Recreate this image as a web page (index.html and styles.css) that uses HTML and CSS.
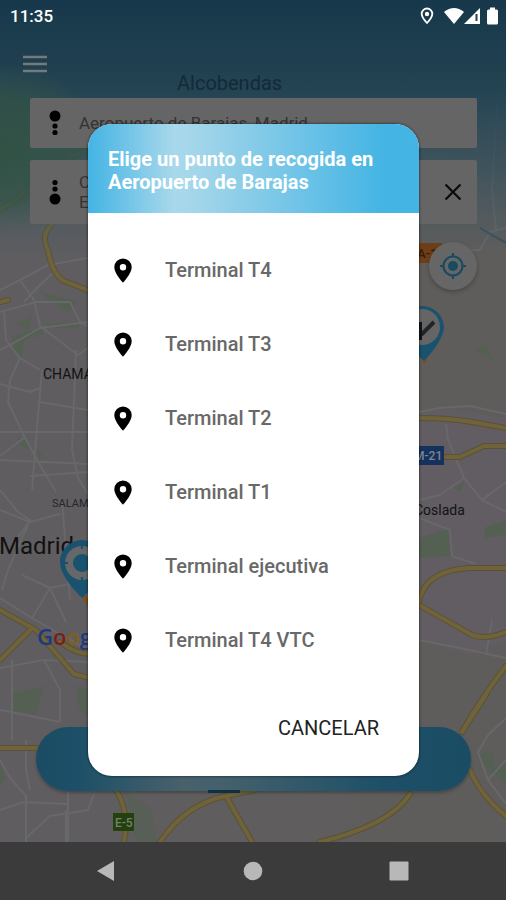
FILE: index.html
```html
<!DOCTYPE html>
<html lang="es">
<head>
<meta charset="utf-8">
<meta name="viewport" content="width=device-width, initial-scale=1">
<title>Punto de recogida</title>
<link rel="stylesheet" href="styles.css">
</head>
<body>
<main class="app">
  <svg class="map" viewBox="0 0 506 842" preserveAspectRatio="xMidYMid slice" aria-hidden="true">
    <defs>
      <linearGradient id="land" x1="0" x2="1" y1="0" y2="0">
        <stop offset="0" stop-color="#5f5d60"/>
        <stop offset="1" stop-color="#5f5d5b"/>
      </linearGradient>
      <linearGradient id="sky" x1="0" x2="0" y1="0" y2="1">
        <stop offset="0" stop-color="#16384a"/>
        <stop offset=".35" stop-color="#1f4152" stop-opacity=".92"/>
        <stop offset=".65" stop-color="#2b4d5c" stop-opacity=".6"/>
        <stop offset="1" stop-color="#395866" stop-opacity="0"/>
      </linearGradient>
      <radialGradient id="forest">
        <stop offset="0" stop-color="#315243" stop-opacity=".9"/>
        <stop offset=".6" stop-color="#325344" stop-opacity=".7"/>
        <stop offset="1" stop-color="#3b574c" stop-opacity="0"/>
      </radialGradient>
    </defs>
    <rect width="506" height="842" fill="url(#land)"/>
    <path fill="#615d62" d="M419 412L450 409L506 418V640L470 655L419 640Z"/>
    <g fill="#536052">
      <path d="M40 292L62 298L76 300L70 312L52 302ZM16 324L32 316L28 330ZM12 336L42 328L44 334L24 340L22 358L12 348ZM46 324L80 322L78 328L48 328ZM18 436L28 442L30 450L18 444ZM36 448L42 454L40 460Z"/>
      <path d="M12 694L44 686L36 714L12 710ZM76 686L88 690V718L80 710ZM0 762L5 778L0 786Z"/>
      <path d="M419 538L448 529L450 556L419 558ZM484 528L506 520V534L486 538ZM474 350L486 346L496 362ZM454 488L464 482L460 492ZM478 755L492 750L494 768L482 766ZM488 770L506 762V782Z"/>
      <path d="M126 792L150 808L158 842H136Z" opacity=".6"/>
    </g>
    <g fill="none" stroke="#686769" stroke-width="2" stroke-linejoin="round">
      <path d="M0 290L20 280L48 265L88 258M20 280L34 300L40 326L78 355L88 348M0 312L36 302L70 302L80 322L88 326M0 350L12 344L40 328L88 322M4 312L6 340L20 358L10 380L8 402L24 436L40 465L56 492M20 358L40 370M0 384L30 392L40 388M42 370L36 440L32 490M40 402L88 410M76 350L72 450L78 478L88 494M0 432L88 432M0 460L88 464M0 456L24 438M30 476L60 474L88 472M54 272L40 285L24 302M0 490L18 512L30 520L8 570L2 590M0 510L30 522L60 514M22 575L50 588L88 580M30 520L16 540M50 588L32 618M50 588L66 622M62 500L70 600M0 598L32 618L88 650M0 668L44 660L88 662M12 660L12 740M0 710L60 722M44 660L60 690L60 722"/>
      <path d="M0 760L10 778L26 796L26 842M0 810L24 802L68 804M68 792L68 842M26 838L50 816L88 810L94 794M26 740V770L30 790M66 810L66 842"/>
      <path d="M506 228L490 232L480 250L462 250M498 90L492 190L496 230M419 412L440 408L470 406L506 414M446 424L448 440L464 478L482 500L506 512M464 478L440 495L419 500M419 518L450 530L452 556L476 564M419 640L460 648L506 658M492 620L486 655M506 482L482 500L492 492M506 718L488 735L478 752L488 780L506 804M488 780L506 760"/>
    </g>
    <g fill="none" stroke="#566157" stroke-width="4" opacity=".7">
      <path d="M313 30V65Q300 92 280 100M390 100Q405 70 440 60T506 52M50 70L68 98L88 140"/>
    </g>
    <g fill="none" stroke="#5a5238" stroke-width="6" stroke-linecap="round" stroke-linejoin="round">
      <path d="M0 210L28 190L50 165L88 150M52 224Q40 236 48 250Q52 274 64 281L90 291M0 302L8 300"/>
      <path d="M419 418Q450 418 472 422L506 428M446 457L460 457L484 446H506"/>
      <path d="M419 602Q425 570 470 568L506 568M419 605L472 635Q486 640 506 632M506 666Q480 700 462 732"/>
      <path d="M0 610L36 630L74 674L90 678M32 628L0 660M60 642Q76 654 90 654M0 748H40"/>
      <path d="M116 790Q130 812 124 842M160 842Q185 805 225 796L255 790M226 796L252 842M320 842Q390 825 410 794M470 770Q480 795 506 816M462 732L486 695"/>
    </g>
    <g fill="none" stroke="#70633a" stroke-width="4" stroke-linecap="round" stroke-linejoin="round">
      <path d="M0 210L28 190L50 165L88 150M52 224Q40 236 48 250Q52 274 64 281L90 291M0 302L8 300"/>
      <path d="M419 418Q450 418 472 422L506 428M446 457L460 457L484 446H506"/>
      <path d="M419 602Q425 570 470 568L506 568M419 605L472 635Q486 640 506 632M506 666Q480 700 462 732"/>
      <path d="M0 610L36 630L74 674L90 678M32 628L0 660M60 642Q76 654 90 654M0 748H40"/>
      <path d="M116 790Q130 812 124 842M160 842Q185 805 225 796L255 790M226 796L252 842M320 842Q390 825 410 794M470 770Q480 795 506 816M462 732L486 695"/>
    </g>
    <path d="M480 228L506 243" stroke="#3b4f63" stroke-width="2"/>
    <rect width="506" height="260" fill="url(#sky)"/>
    <ellipse cx="0" cy="150" rx="110" ry="85" fill="url(#forest)"/>

    <g class="map-text">
      <text x="177" y="90" font-size="20" fill="#122a38">Alcobendas</text>
      <text x="43" y="379" font-size="14">CHAMARTÍN</text>
      <text x="52" y="507" font-size="11" fill="#262626">SALAMANCA</text>
      <text x="-1" y="554" font-size="24">Madrid</text>
      <text x="414" y="515" font-size="14">Coslada</text>
      <text class="brand" x="37" y="645" font-size="22"><tspan fill="#1b3a80">G</tspan><tspan fill="#7c1d18">o</tspan><tspan fill="#80601a">o</tspan><tspan fill="#1b3a80">g</tspan></text>
    </g>
    <rect x="404" y="243" width="38" height="20" fill="#6f3e17"/>
    <text class="shield" x="417" y="258" font-size="13" fill="#321d0c">A-1</text>
    <rect x="400" y="446" width="44" height="19" fill="#15325f"/>
    <text class="shield" x="414" y="460" font-size="12" fill="#80858c">M-21</text>
    <rect x="113" y="813" width="21" height="18" fill="#24400f"/>
    <text class="shield" x="115" y="827" font-size="12" fill="#75826c">E-5</text>

    <path d="M80 594L90 610V602L83 592Z" fill="#7a5119"/>
    <path d="M60 562A22 22 0 0 1 104 562Q104 578 82 598Q60 576 60 562Z" fill="#18526e"/>
    <circle cx="82" cy="563" r="17" fill="#656769"/>
    <circle cx="82" cy="563" r="9" fill="#18526e"/>
    <path d="M82 546v3M82 577v3M65 563h3" stroke="#18526e" stroke-width="2"/>
    <path d="M421 352L424 365L428 358Z" fill="#7a5119"/>
    <path d="M400 328A22 22 0 0 1 444 328Q442 342 424 361Q400 340 400 328Z" fill="#18526e"/>
    <circle cx="422" cy="327" r="18" fill="#656565"/>
    <path d="M412 338L422 334L434 322" fill="none" stroke="#202528" stroke-width="4"/>
    <path d="M420 322V340" stroke="#101518" stroke-width="4"/>
  </svg>

  <header class="status">
    <span>11:35</span>
    <span class="status-icons">
      <svg width="14" height="18" viewBox="0 0 14 18"><path d="M7 1.500a5.300 5.300 0 0 0-5.300 5.300C1.700 10.500 7 16 7 16s5.300-5.500 5.300-9.200A5.300 5.300 0 0 0 7 1.500Z" fill="none" stroke="#fff" stroke-width="1.800"/><circle cx="7" cy="7" r="2.200" fill="#fff"/></svg>
      <svg class="wifi" width="20" height="18" viewBox="0 0 20 18"><path d="M0 5Q10-3 20 5L10 17Z" fill="#fff"/></svg>
      <svg width="16" height="18" viewBox="0 0 16 18"><path d="M0 17L16 1V17Z" fill="#fff"/><path d="M12.500 7V14" stroke="#21404f" stroke-width="2"/></svg>
      <svg class="battery" width="11" height="18" viewBox="0 0 11 18"><path d="M3 0.500H8V2.500H9.500Q11 2.500 11 4V16Q11 17.500 9.500 17.500H1.500Q0 17.500 0 16V4Q0 2.500 1.500 2.500H3Z" fill="#fff"/></svg>
    </span>
  </header>

  <button class="menu" type="button" aria-label="Menú">
    <svg width="24" height="18" viewBox="0 0 24 18"><path d="M0 2H24M0 9H24M0 16H24" stroke="#74797b" stroke-width="2.600"/></svg>
  </button>

  <form class="route">
    <div class="field">
      <svg width="12" height="26" viewBox="0 0 12 26"><circle cx="6" cy="6" r="5.500"/><circle cx="6" cy="16" r="2.600"/><circle cx="6" cy="22.500" r="2.600"/></svg>
      <input type="text" value="Aeropuerto de Barajas, Madrid" aria-label="Origen">
    </div>
    <div class="field tall">
      <svg width="12" height="26" viewBox="0 0 12 26"><circle cx="6" cy="3.500" r="2.600"/><circle cx="6" cy="10" r="2.600"/><circle cx="6" cy="20" r="5.500"/></svg>
      <textarea rows="2" aria-label="Destino">C
E</textarea>
      <button class="clear" type="button" aria-label="Borrar destino">
        <svg width="18" height="18" viewBox="0 0 18 18"><path d="M1.500 1.500L16.500 16.500M16.500 1.500L1.500 16.500" stroke="#0b0b0b" stroke-width="2.200"/></svg>
      </button>
    </div>
  </form>

  <button class="locate" type="button" aria-label="Mi ubicación">
    <svg width="26" height="26" viewBox="0 0 26 26"><circle cx="13" cy="13" r="9.500" fill="none" stroke="#194a62" stroke-width="2.200"/><circle cx="13" cy="13" r="5" fill="#194a62"/><path d="M13 0V4M13 22V26M0 13H4M22 13H26" stroke="#194a62" stroke-width="2.200"/></svg>
  </button>

  <button class="confirm" type="button" aria-label="Confirmar"></button>
  <div class="handle"></div>
</main>

<nav class="system">
  <button type="button" aria-label="Atrás"><svg width="20" height="22" viewBox="0 0 20 22"><path d="M1 11L18 1V21Z"/></svg></button>
  <button type="button" aria-label="Inicio"><svg width="20" height="22" viewBox="0 0 20 22"><circle cx="10" cy="11" r="9.300"/></svg></button>
  <button type="button" aria-label="Recientes"><svg width="20" height="22" viewBox="0 0 20 22"><rect x="0.500" y="1.500" width="19" height="19" rx="1"/></svg></button>
</nav>

<div class="overlay">
  <section class="dialog" role="dialog" aria-labelledby="dialog-title">
    <h1 id="dialog-title">Elige un punto de recogida en Aeropuerto de Barajas</h1>
    <ul>
      <li><button type="button"><svg width="18" height="25" viewBox="0 0 18 25"><use href="#pin"/></svg>Terminal T4</button></li>
      <li><button type="button"><svg width="18" height="25" viewBox="0 0 18 25"><use href="#pin"/></svg>Terminal T3</button></li>
      <li><button type="button"><svg width="18" height="25" viewBox="0 0 18 25"><use href="#pin"/></svg>Terminal T2</button></li>
      <li><button type="button"><svg width="18" height="25" viewBox="0 0 18 25"><use href="#pin"/></svg>Terminal T1</button></li>
      <li><button type="button"><svg width="18" height="25" viewBox="0 0 18 25"><use href="#pin"/></svg>Terminal ejecutiva</button></li>
      <li><button type="button"><svg width="18" height="25" viewBox="0 0 18 25"><use href="#pin"/></svg>Terminal T4 VTC</button></li>
    </ul>
    <button class="cancel" type="button">CANCELAR</button>
  </section>
</div>

<svg class="defs" width="0" height="0" aria-hidden="true">
  <symbol id="pin" viewBox="0 0 18 25"><path fill-rule="evenodd" d="M9 0.500A8.700 8.700 0 0 0 0.300 9.200C0.300 15.500 9 24.700 9 24.700S17.700 15.500 17.700 9.200A8.700 8.700 0 0 0 9 0.500ZM9 6A3.200 3.200 0 1 1 9 12.400A3.200 3.200 0 0 1 9 6Z"/></symbol>
</svg>
</body>
</html>
```
FILE: styles.css
```css
* {
  box-sizing: border-box;
}

body {
  margin: 0;
  min-height: 100vh;
  display: flex;
  flex-direction: column;
  position: relative;
  font-family: Roboto, sans-serif;
  background: #5f5d5e;
}

button {
  padding: 0;
  border: 0;
  background: none;
  font: inherit;
  color: inherit;
  cursor: pointer;
}

svg {
  display: block;
  flex: none;
}

.defs {
  position: absolute;
}

.app {
  flex: 1;
  position: relative;
  isolation: isolate;
  overflow: hidden;
  display: flex;
  flex-direction: column;
}

.map {
  position: absolute;
  inset: 0;
  z-index: -1;
  width: 100%;
  height: 100%;
}

.map-text {
  fill: #121212;
}

.shield {
  font-weight: 500;
}

.brand {
  font-family: "Open Sans", sans-serif;
  font-weight: 600;
}

.status {
  display: flex;
  justify-content: space-between;
  align-items: center;
  height: 32px;
  padding: 0 8px 0 10px;
  color: #fff;
  font-size: 17px;
  font-weight: 500;
}

.status-icons {
  display: flex;
}

.wifi {
  margin-left: 10px;
}

.battery {
  margin-left: 7px;
}

.menu {
  align-self: flex-start;
  margin: 23px 0 0 23px;
}

.route {
  display: grid;
  gap: 12px;
  margin: 25px 29px 0 30px;
}

.field {
  display: flex;
  align-items: center;
  min-height: 50px;
  padding: 0 15px 0 19px;
  border-radius: 2px;
  background: #656565;
}

.tall {
  min-height: 64px;
}

.field input,
.field textarea {
  flex: 1;
  min-width: 0;
  margin: 0 0 0 18px;
  padding: 0;
  border: 0;
  outline: 0;
  resize: none;
  background: none;
  color: #343434;
  font: 17px/20px Roboto, sans-serif;
}

.locate {
  align-self: flex-end;
  display: grid;
  place-items: center;
  width: 48px;
  height: 48px;
  margin: 18px 29px 0 0;
  border-radius: 50%;
  background: #666;
  box-shadow: 0 2px 4px rgba(0, 0, 0, .25);
}

.confirm {
  height: 64px;
  margin: auto 35px 0 36px;
  border-radius: 32px;
  background: linear-gradient(90deg, #1a4d64, #1d5068 10%, #48616c 34%, #42606c 45%, #1d5068 80%, #1a4d64);
  box-shadow: 0 2px 3px rgba(0, 0, 0, .25);
}

.handle {
  width: 32px;
  height: 3px;
  margin: -1px 0 49px 208px;
  background: #0f2f42;
}

.system {
  display: flex;
  justify-content: space-between;
  align-items: center;
  height: 58px;
  padding: 0 97px 0 96px;
  background: #3b3b3b;
}

.system svg {
  fill: #b8b8b8;
}

.overlay {
  position: absolute;
  inset: 0;
  padding: 124px 87px 0 88px;
}

.dialog {
  display: flex;
  flex-direction: column;
  overflow: hidden;
  border-radius: 24px;
  background: #fff;
  box-shadow: 0 0 3px rgba(0, 0, 0, .7);
}

.dialog h1 {
  margin: 0;
  padding: 24px 20px 19px;
  background: linear-gradient(90deg, #43b4e4, #a8d8eb 26%, #a4d6ea 32%, #43b4e4 90%);
  color: #fff;
  font-size: 20px;
  font-weight: 700;
  line-height: 23px;
}

.dialog ul {
  margin: 0;
  padding: 20px 0 0;
  list-style: none;
}

.dialog li button {
  display: flex;
  align-items: center;
  gap: 33px;
  width: 100%;
  height: 74px;
  padding: 0 26px;
  color: #686868;
  font-size: 20px;
  font-weight: 500;
  line-height: 25px;
  text-align: left;
}

.dialog li svg {
  fill: #000;
}

.cancel {
  align-self: flex-end;
  margin: 31px 40px 28px;
  color: #222;
  font-size: 20px;
  line-height: 40px;
}
```
